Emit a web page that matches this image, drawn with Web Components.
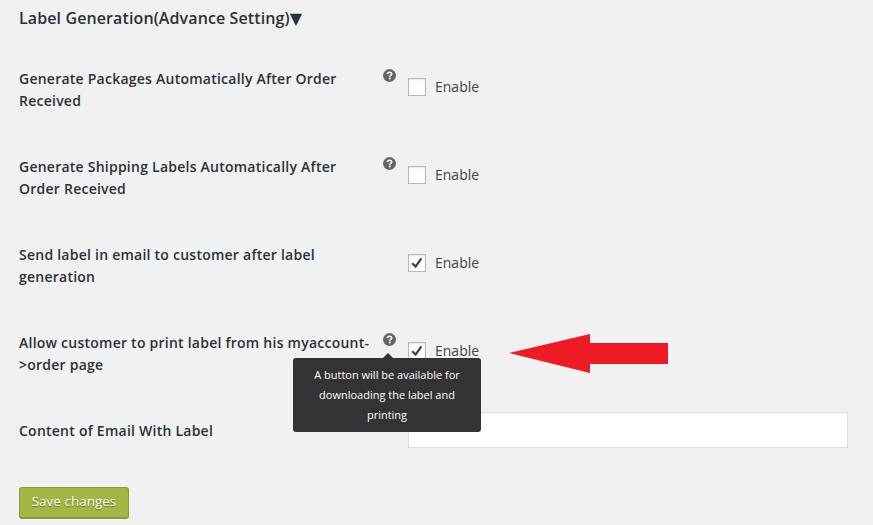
<!DOCTYPE html>
<html>
<head>
<meta charset="utf-8">
<title>Label Generation</title>
<style>
html, body { margin: 0; background: #f1f1f1; }
body { font-family: "Open Sans", "Liberation Sans", sans-serif; color: #23282d; height: 525px; overflow: hidden; }
.caret { font-family: "DejaVu Sans", sans-serif; font-size: 16px; }
</style>
</head>
<body>
<settings-page>
  <span slot="title">Label Generation(Advance Setting)<span class="caret">▼</span></span>
  <setting-row help>
    <span slot="label">Generate Packages Automatically After Order Received</span>
    <enable-check></enable-check>
  </setting-row>
  <setting-row help>
    <span slot="label">Generate Shipping Labels Automatically After Order Received</span>
    <enable-check></enable-check>
  </setting-row>
  <setting-row>
    <span slot="label">Send label in email to customer after label generation</span>
    <enable-check checked></enable-check>
  </setting-row>
  <setting-row help tip="A button will be available for downloading the label and printing">
    <span slot="label">Allow customer to print label from his myaccount-&gt;order page</span>
    <enable-check checked></enable-check>
  </setting-row>
  <setting-row single>
    <span slot="label">Content of Email With Label</span>
    <text-box></text-box>
  </setting-row>
  <save-button>Save changes</save-button>
</settings-page>
<red-arrow></red-arrow>

<script>
class SettingsPage extends HTMLElement {
  constructor() {
    super();
    this.attachShadow({ mode: "open" }).innerHTML = `
      <style>
        :host { display: block; padding: 7px 25px 0 19px; }
        h2 { margin: 0 0 16px; font-size: 16px; line-height: 22px; font-weight: 600; letter-spacing: .11px; color: #2c3136; }
        ::slotted(save-button) { margin-top: 39px; }
      </style>
      <h2><slot name="title"></slot></h2>
      <slot></slot>`;
  }
}

class SettingRow extends HTMLElement {
  constructor() {
    super();
    this.attachShadow({ mode: "open" });
  }
  connectedCallback() {
    const tip = this.getAttribute("tip");
    this.shadowRoot.innerHTML = `
      <style>
        :host { display: grid; grid-template-columns: 355px 34px 1fr; padding: 22px 0; position: relative; }
        :host([tip]) { z-index: 2; }
        :host([single]) { padding: 0; margin-top: 14px; align-items: center; }
        :host([single]) .label { padding-top: 2px; }
        .label { font-size: 14px; line-height: 22px; font-weight: 600; letter-spacing: .24px; color: #2c3136; }
        .help { justify-self: start; margin: 1px 0 0 9px; }
        .field { min-width: 0; }
      </style>
      <div class="label"><slot name="label"></slot></div>
      <div class="help">${this.hasAttribute("help") ? `<help-icon ${tip ? `tip="${tip}"` : ""}></help-icon>` : ""}</div>
      <div class="field"><slot></slot></div>`;
  }
}

class HelpIcon extends HTMLElement {
  constructor() {
    super();
    this.attachShadow({ mode: "open" });
  }
  connectedCallback() {
    const tip = this.getAttribute("tip");
    this.shadowRoot.innerHTML = `
      <style>
        :host { display: block; position: relative; width: 13px; height: 13px; }
        svg { display: block; }
        .tip {
          position: absolute; left: -90px; top: 25px; width: 188px; height: 74px; box-sizing: border-box;
          padding: 7px 10px; background: #333; color: #fff; border-radius: 3px; text-align: center;
          font-size: 11px; line-height: 20px; font-weight: 400; z-index: 5;
        }
        .tip::before {
          content: ""; position: absolute; left: 90px; top: -5px; width: 0; height: 0;
          border-left: 5px solid transparent; border-right: 5px solid transparent; border-bottom: 5px solid #333;
        }
      </style>
      <svg width="13" height="13" viewBox="0 0 13 13">
        <circle cx="6.5" cy="6.5" r="6.5" fill="#666"/>
        <path d="M4.4 5.1C4.5 3.9 5.3 3.2 6.6 3.2C7.9 3.2 8.7 3.9 8.7 4.9C8.7 6.3 6.8 6.3 6.8 7.7" fill="none" stroke="#fff" stroke-width="1.6"/>
        <rect x="5.9" y="8.6" width="1.8" height="1.7" fill="#fff"/>
      </svg>
      ${tip ? `<div class="tip">${tip}</div>` : ""}`;
  }
}

class EnableCheck extends HTMLElement {
  constructor() {
    super();
    this.attachShadow({ mode: "open" });
  }
  connectedCallback() {
    const on = this.hasAttribute("checked");
    this.shadowRoot.innerHTML = `
      <style>
        :host { display: flex; align-items: center; gap: 9px; height: 18px; margin-top: 10px; font-size: 14px; line-height: 16px; color: #444; }
        .box {
          width: 18px; height: 18px; box-sizing: border-box; background: #fff; border: 1px solid #b4b9be;
          box-shadow: inset 0 1px 2px rgba(0,0,0,.1);
        }
        svg { display: block; }
      </style>
      <div class="box">${on ? `<svg width="16" height="16" viewBox="0 0 16 16"><path d="M3.2 8.2L6.6 11.6L12.4 3.4" fill="none" stroke="#3f3a5c" stroke-width="2.2"/></svg>` : ""}</div>
      <span>Enable</span>`;
  }
}

class TextBox extends HTMLElement {
  constructor() {
    super();
    this.attachShadow({ mode: "open" }).innerHTML = `
      <style>
        :host { display: block; height: 36px; box-sizing: border-box; background: #fff; border: 1px solid #ddd; }
      </style>`;
  }
}

class SaveButton extends HTMLElement {
  constructor() {
    super();
    this.attachShadow({ mode: "open" }).innerHTML = `
      <style>
        :host {
          display: block; width: 110px; height: 32px; box-sizing: border-box; text-align: center;
          background: #a4b745; border: 1px solid #8a9a38; border-bottom-width: 2px; border-radius: 3px;
          color: #fff; font-size: 13.5px; line-height: 27px; text-shadow: 0 1px 1px #5f6b20;
        }
      </style>
      <slot></slot>`;
  }
}

class RedArrow extends HTMLElement {
  constructor() {
    super();
    this.attachShadow({ mode: "open" }).innerHTML = `
      <style>
        :host { position: absolute; left: 509px; top: 334px; width: 159px; height: 39px; }
        svg { display: block; }
      </style>
      <svg width="159" height="39" viewBox="0 0 159 39">
        <polygon points="0,19 81,0 81,9 159,9 159,30 81,30 81,39" fill="#ed1c24"/>
      </svg>`;
  }
}

customElements.define("settings-page", SettingsPage);
customElements.define("setting-row", SettingRow);
customElements.define("help-icon", HelpIcon);
customElements.define("enable-check", EnableCheck);
customElements.define("text-box", TextBox);
customElements.define("save-button", SaveButton);
customElements.define("red-arrow", RedArrow);
</script>
</body>
</html>
